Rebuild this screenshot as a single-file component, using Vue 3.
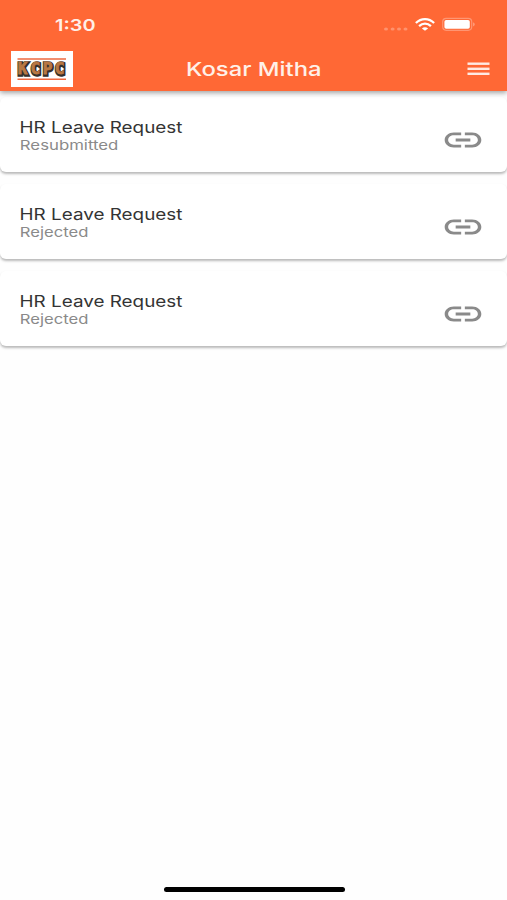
<script setup>
const requests = [
  { id: 1, title: 'HR Leave Request', status: 'Resubmitted', width: 97.5 },
  { id: 2, title: 'HR Leave Request', status: 'Rejected', width: 67.5 },
  { id: 3, title: 'HR Leave Request', status: 'Rejected', width: 67.5 },
]
</script>

<template>
  <div class="screen">
    <header class="header">
      <div class="status">
        <svg class="time" width="42" height="20" viewBox="0 0 42 20">
          <text x="0" y="15.7" textLength="40.5" lengthAdjust="spacingAndGlyphs">1:30</text>
        </svg>
        <div class="indicators">
          <svg width="24" height="6" viewBox="0 0 24 6" fill="#fff" fill-opacity=".28">
            <ellipse cx="2" cy="3" rx="2" ry="1.6" />
            <ellipse cx="8.6" cy="3" rx="2" ry="1.6" />
            <ellipse cx="15" cy="3" rx="2" ry="1.6" />
            <ellipse cx="21.5" cy="3" rx="2" ry="1.6" />
          </svg>
          <svg class="wifi" width="20" height="14" viewBox="0 0 20 14" fill="none" stroke="#fff" stroke-width="2.2">
            <path d="M.9 5.1C6-.2 14-.2 19.1 5.1" />
            <path d="M4.1 8.1c3.4-3.4 8.4-3.4 11.8 0" />
            <path d="M10 12.8 6.9 10.4c1.8-1.6 4.4-1.6 6.2 0z" fill="#fff" stroke="none" />
          </svg>
          <svg class="battery" width="34" height="14" viewBox="0 0 34 14">
            <rect x=".7" y="1.3" width="29" height="12" rx="3.5" fill="none" stroke="#fff" stroke-opacity=".3" stroke-width="1.2" />
            <rect x="2.4" y="2.9" width="25.4" height="8.8" rx="1.8" fill="#fff" />
            <path d="M31.2 5.3c2 .8 2 3.4 0 4.2z" fill="#fff" fill-opacity=".4" />
          </svg>
        </div>
      </div>
      <div class="bar">
        <svg class="logo" width="62" height="36" viewBox="0 0 62 36">
          <rect width="62" height="36" fill="#fff" />
          <path d="M6.5 8H55M6.5 28.2H55" stroke="#ee6940" stroke-width="1.6" />
          <text class="logo-shadow" x="7.2 20 32.2 44.2" y="23.8">KCPC</text>
          <text class="logo-face" x="6.8 19.6 31.8 43.8" y="23.4">KCPC</text>
        </svg>
        <svg class="title" width="138" height="26" viewBox="0 0 138 26">
          <text x="0" y="19.5" textLength="135.5" lengthAdjust="spacingAndGlyphs">Kosar Mitha</text>
        </svg>
        <svg class="menu" width="22" height="14" viewBox="0 0 22 14" fill="#fff" fill-opacity=".86">
          <rect x=".5" y=".5" width="22" height="2.4" />
          <rect x=".5" y="5.6" width="22" height="2.4" />
          <rect x=".5" y="10.6" width="22" height="2.4" />
        </svg>
      </div>
    </header>

    <main class="list">
      <article v-for="item in requests" :key="item.id" class="card">
        <div class="copy">
          <svg width="166" height="20" viewBox="0 0 166 20">
            <text class="name" x="-.4" y="15.7" textLength="162.8" lengthAdjust="spacingAndGlyphs">{{ item.title }}</text>
          </svg>
          <svg width="166" height="18" viewBox="0 0 166 18">
            <text class="state" x="-.2" y="12.8" :textLength="item.width + 1" lengthAdjust="spacingAndGlyphs">{{ item.status }}</text>
          </svg>
        </div>
        <svg class="link" width="44" height="36" viewBox="0 0 24 24" preserveAspectRatio="none" fill="#8a8a8a">
          <path d="M3.9 12c0-1.71 1.39-3.1 3.1-3.1h4V7H7c-2.76 0-5 2.24-5 5s2.24 5 5 5h4v-1.9H7c-1.71 0-3.1-1.39-3.1-3.1zM8 13h8v-2H8v2zm9-6h-4v1.9h4c1.71 0 3.1 1.39 3.1 3.1s-1.39 3.1-3.1 3.1h-4V17h4c2.76 0 5-2.24 5-5s-2.24-5-5-5z" />
        </svg>
      </article>
    </main>

    <div class="home"></div>
  </div>
</template>

<style>
body {
  background: #fefefe;
}
</style>

<style scoped>
.screen {
  display: flex;
  flex-direction: column;
  box-sizing: border-box;
  width: 507px;
  height: 900px;
  overflow: hidden;
  background: #fefefe;
  font-family: Inter, 'Liberation Sans', sans-serif;
}
svg {
  display: block;
  flex: none;
  overflow: visible;
}
.header {
  z-index: 1;
  flex: none;
  height: 91px;
  background: #ff6835;
  box-shadow: 0 2px 5px rgba(0, 0, 0, 0.36);
}
.status {
  display: flex;
  justify-content: space-between;
  height: 36px;
  padding: 15px 31px 0 55px;
}
.time {
  font-size: 16.6px;
  font-weight: 600;
  fill: #fff0e8;
}
.indicators {
  display: flex;
  align-items: flex-start;
}
.indicators > svg:first-child {
  margin-top: 11px;
}
.wifi {
  margin: 3px 0 0 7px;
}
.battery {
  margin: 2px 0 0 7px;
}
.bar {
  display: flex;
  padding: 0 18px 0 11px;
}
.logo-shadow,
.logo-face {
  font-family: 'DejaVu Sans Mono', monospace;
  font-size: 16px;
  font-weight: 700;
}
.logo-shadow {
  fill: #34302c;
  stroke: #34302c;
  stroke-width: 3.4;
}
.logo-face {
  fill: #b97843;
  stroke: #b97843;
  stroke-width: 0.9;
}
.title {
  margin: 5px 0 0 112.5px;
  font-size: 19px;
  font-weight: 500;
  fill: #fff0e8;
}
.menu {
  margin: 11px 0 0 auto;
}
.list {
  display: flex;
  flex-direction: column;
  gap: 12.4px;
  padding-top: 5.5px;
}
.card {
  display: flex;
  justify-content: space-between;
  box-sizing: border-box;
  height: 75px;
  padding: 20px 22.5px 0 20px;
  border-radius: 6px;
  background: #fff;
  box-shadow: 0 2px 2.5px rgba(0, 0, 0, 0.27);
}
.name {
  font-size: 15.8px;
  fill: #343434;
}
.state {
  font-size: 13.6px;
  fill: #8a8a8a;
}
.link {
  margin-top: 5px;
}
.home {
  width: 181px;
  height: 5px;
  margin: auto auto 8px 163.5px;
  border-radius: 3px;
  background: #000;
}
</style>
